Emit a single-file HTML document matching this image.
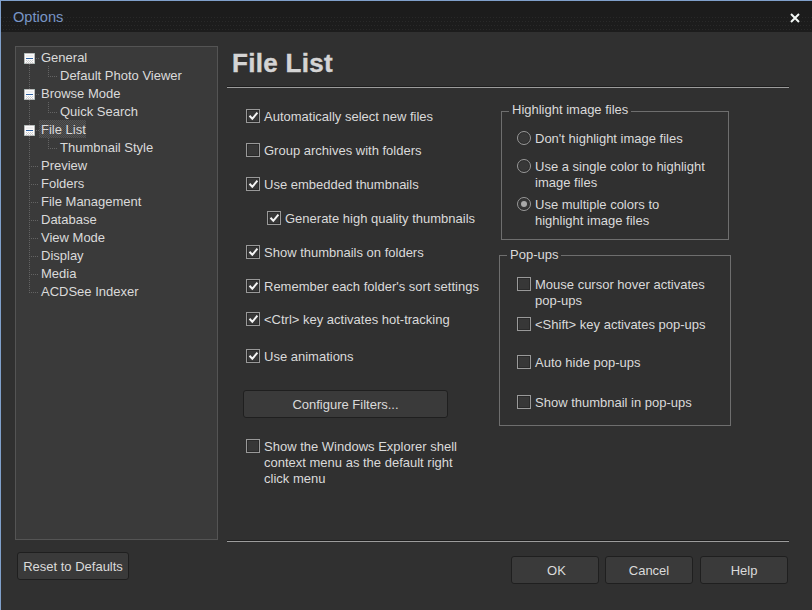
<!DOCTYPE html>
<html><head><meta charset="utf-8">
<style>
*{box-sizing:border-box;margin:0;padding:0}
html,body{width:812px;height:610px;overflow:hidden;background:#303030}
body{font-family:"Liberation Sans",sans-serif;font-size:13px;color:#dadada;position:relative}
.a{position:absolute;white-space:nowrap;line-height:16px}
#bt{position:absolute;left:0;top:0;width:812px;height:1px;background:#80a0cb}
#bl{position:absolute;left:0;top:0;width:1px;height:610px;background:#80a0cb}
#title{position:absolute;left:1px;top:1px;width:811px;height:31px;background:#1c1c1c}
#ttext{left:12px;top:8px;color:#7895c6;font-size:14.6px}
#tree{position:absolute;left:15px;top:46px;width:203px;height:494px;background:#3a3a3a;border:1px solid #545454}
.btn{position:absolute;background:#3a3a3a;border:1px solid #1f1f1f;border-radius:3px;text-align:center;color:#dadada;line-height:25px}
.sep{position:absolute;height:2px;border-top:1px solid #1e1e1e;background:#9c9c9c}
.cb{position:absolute;width:14px;height:14px;border:1px solid #999;background:#373737;box-shadow:inset 0 0 0 1px #2a2a2a}
.cb svg{position:absolute;left:1px;top:1px}
.rd{position:absolute;width:14px;height:14px;border:1px solid #999;border-radius:50%;background:#383838;box-shadow:inset 0 0 0 1px #2c2c2c}
.grp{position:absolute;border:1px solid #6e6e6e}
.gl{position:absolute;background:#303030;padding:0 3px;line-height:16px;white-space:nowrap}
.exp{position:absolute;width:11px;height:11px}
.dv{position:absolute;width:1px;background:repeating-linear-gradient(to bottom,#646464 0 1px,transparent 1px 2px)}
.dh{position:absolute;height:1px;background:repeating-linear-gradient(to right,#646464 0 1px,transparent 1px 2px)}
.sel{position:absolute;background:repeating-conic-gradient(#545454 0 25%,#404040 0 50%) 0 0/2px 2px}
</style></head><body>
<div id="bt"></div><div id="bl"></div>
 <div id="title"><svg width="811" height="14" style="position:absolute;left:0;top:16px"><defs><pattern id="dp" width="3" height="16" patternUnits="userSpaceOnUse"><path d="M0 0h1v1h-1zM2 4h1v1h-1zM1 8h1v1h-1zM2 12h1v1h-1z" fill="#292929"/></pattern></defs><rect width="811" height="14" fill="url(#dp)"/></svg><span class="a" id="ttext">Options</span>
  <svg style="position:absolute;left:789px;top:12px" width="10" height="10" viewBox="0 0 10 10"><path d="M1 1L9 9M9 1L1 9" stroke="#f4f8f6" stroke-width="2"/></svg>
 </div>
 <div id="tree"></div>
<!-- tree items -->
<div class="dv" style="left:29px;top:64px;height:229px"></div>
<div class="exp" style="left:24px;top:53px"><svg width="11" height="11" style="position:absolute;left:0;top:0"><rect x="0.5" y="0.5" width="10" height="10" fill="#fbfbfb" stroke="#bcbcbc"/><rect x="2" y="2" width="7" height="2" fill="#efefef"/><rect x="2" y="5" width="7" height="1" fill="#2f62a3"/><path d="M2 7h1v1h-1zM4 7h1v1h-1zM6 7h1v1h-1zM8 7h1v1h-1zM3 8h1v1h-1zM5 8h1v1h-1zM7 8h1v1h-1zM2 9h1v1h-1zM4 9h1v1h-1zM6 9h1v1h-1zM8 9h1v1h-1z" fill="#cfcfcf"/><path d="M0 0h1v1h-1zM10 0h1v1h-1zM0 10h1v1h-1zM10 10h1v1h-1z" fill="#9ab8b0"/></svg></div>
<div class="dh" style="left:36px;top:58px;width:3px"></div>
<div class="a" style="left:41px;top:50px">General</div>
<div class="dv" style="left:48px;top:66px;height:10px"></div><div class="dh" style="left:48px;top:76px;width:9px"></div>
<div class="a" style="left:60px;top:68px">Default Photo Viewer</div>
<div class="exp" style="left:24px;top:89px"><svg width="11" height="11" style="position:absolute;left:0;top:0"><rect x="0.5" y="0.5" width="10" height="10" fill="#fbfbfb" stroke="#bcbcbc"/><rect x="2" y="2" width="7" height="2" fill="#efefef"/><rect x="2" y="5" width="7" height="1" fill="#2f62a3"/><path d="M2 7h1v1h-1zM4 7h1v1h-1zM6 7h1v1h-1zM8 7h1v1h-1zM3 8h1v1h-1zM5 8h1v1h-1zM7 8h1v1h-1zM2 9h1v1h-1zM4 9h1v1h-1zM6 9h1v1h-1zM8 9h1v1h-1z" fill="#cfcfcf"/><path d="M0 0h1v1h-1zM10 0h1v1h-1zM0 10h1v1h-1zM10 10h1v1h-1z" fill="#9ab8b0"/></svg></div>
<div class="dh" style="left:36px;top:94px;width:3px"></div>
<div class="a" style="left:41px;top:86px">Browse Mode</div>
<div class="dv" style="left:48px;top:102px;height:10px"></div><div class="dh" style="left:48px;top:112px;width:9px"></div>
<div class="a" style="left:60px;top:104px">Quick Search</div>
<div class="sel" style="left:39px;top:120px;width:47px;height:18px"></div>
<div class="exp" style="left:24px;top:125px"><svg width="11" height="11" style="position:absolute;left:0;top:0"><rect x="0.5" y="0.5" width="10" height="10" fill="#fbfbfb" stroke="#bcbcbc"/><rect x="2" y="2" width="7" height="2" fill="#efefef"/><rect x="2" y="5" width="7" height="1" fill="#2f62a3"/><path d="M2 7h1v1h-1zM4 7h1v1h-1zM6 7h1v1h-1zM8 7h1v1h-1zM3 8h1v1h-1zM5 8h1v1h-1zM7 8h1v1h-1zM2 9h1v1h-1zM4 9h1v1h-1zM6 9h1v1h-1zM8 9h1v1h-1z" fill="#cfcfcf"/><path d="M0 0h1v1h-1zM10 0h1v1h-1zM0 10h1v1h-1zM10 10h1v1h-1z" fill="#9ab8b0"/></svg></div>
<div class="dh" style="left:36px;top:130px;width:3px"></div>
<div class="a" style="left:41px;top:122px">File List</div>
<div class="dv" style="left:48px;top:138px;height:10px"></div><div class="dh" style="left:48px;top:148px;width:9px"></div>
<div class="a" style="left:60px;top:140px">Thumbnail Style</div>
<div class="dh" style="left:29px;top:166px;width:9px"></div>
<div class="a" style="left:41px;top:158px">Preview</div>
<div class="dh" style="left:29px;top:184px;width:9px"></div>
<div class="a" style="left:41px;top:176px">Folders</div>
<div class="dh" style="left:29px;top:202px;width:9px"></div>
<div class="a" style="left:41px;top:194px">File Management</div>
<div class="dh" style="left:29px;top:220px;width:9px"></div>
<div class="a" style="left:41px;top:212px">Database</div>
<div class="dh" style="left:29px;top:238px;width:9px"></div>
<div class="a" style="left:41px;top:230px">View Mode</div>
<div class="dh" style="left:29px;top:256px;width:9px"></div>
<div class="a" style="left:41px;top:248px">Display</div>
<div class="dh" style="left:29px;top:274px;width:9px"></div>
<div class="a" style="left:41px;top:266px">Media</div>
<div class="dh" style="left:29px;top:292px;width:9px"></div>
<div class="a" style="left:41px;top:284px">ACDSee Indexer</div>

<div class="btn" style="left:17px;top:552px;width:112px;height:28px;line-height:26px;padding-top:1px">Reset to Defaults</div>

<div class="a" style="left:232px;top:48px;font-size:26px;font-weight:bold;line-height:30px;color:#d4d4d4;letter-spacing:0.3px;-webkit-text-stroke:0.4px #d4d4d4">File List</div>
<div class="sep" style="left:227px;top:86px;width:562px"></div>

<!-- left checkboxes -->
<div class="cb" style="left:246px;top:109px"><svg width="12" height="12"><path d="M1.5 4.8L4.3 7.8L9.4 1.6" stroke="#f4f4f4" stroke-width="2" fill="none"/></svg></div>
<div class="a" style="left:264px;top:109px">Automatically select new files</div>
<div class="cb" style="left:246px;top:143px"></div>
<div class="a" style="left:264px;top:143px">Group archives with folders</div>
<div class="cb" style="left:246px;top:177px"><svg width="12" height="12"><path d="M1.5 4.8L4.3 7.8L9.4 1.6" stroke="#f4f4f4" stroke-width="2" fill="none"/></svg></div>
<div class="a" style="left:264px;top:177px">Use embedded thumbnails</div>
<div class="cb" style="left:267px;top:211px"><svg width="12" height="12"><path d="M1.5 4.8L4.3 7.8L9.4 1.6" stroke="#f4f4f4" stroke-width="2" fill="none"/></svg></div>
<div class="a" style="left:285px;top:211px">Generate high quality thumbnails</div>
<div class="cb" style="left:246px;top:245px"><svg width="12" height="12"><path d="M1.5 4.8L4.3 7.8L9.4 1.6" stroke="#f4f4f4" stroke-width="2" fill="none"/></svg></div>
<div class="a" style="left:264px;top:245px">Show thumbnails on folders</div>
<div class="cb" style="left:246px;top:279px"><svg width="12" height="12"><path d="M1.5 4.8L4.3 7.8L9.4 1.6" stroke="#f4f4f4" stroke-width="2" fill="none"/></svg></div>
<div class="a" style="left:264px;top:279px">Remember each folder's sort settings</div>
<div class="cb" style="left:246px;top:312px"><svg width="12" height="12"><path d="M1.5 4.8L4.3 7.8L9.4 1.6" stroke="#f4f4f4" stroke-width="2" fill="none"/></svg></div>
<div class="a" style="left:264px;top:312px">&lt;Ctrl&gt; key activates hot-tracking</div>
<div class="cb" style="left:246px;top:349px"><svg width="12" height="12"><path d="M1.5 4.8L4.3 7.8L9.4 1.6" stroke="#f4f4f4" stroke-width="2" fill="none"/></svg></div>
<div class="a" style="left:264px;top:349px">Use animations</div>

<div class="btn" style="left:243px;top:390px;width:205px;height:28px;line-height:26px;padding-top:1px">Configure Filters...</div>

<div class="cb" style="left:246px;top:439px"></div>
<div class="a" style="left:264px;top:439px">Show the Windows Explorer shell<br>context menu as the default right<br>click menu</div>

<div class="sep" style="left:227px;top:540px;width:562px"></div>

<!-- group 1 -->
<div class="grp" style="left:501px;top:111px;width:228px;height:129px"></div>
<div class="gl" style="left:509px;top:102px">Highlight image files</div>
<div class="rd" style="left:517px;top:131px"></div>
<div class="a" style="left:535px;top:131px">Don't highlight image files</div>
<div class="rd" style="left:517px;top:159px"></div>
<div class="a" style="left:535px;top:159px">Use a single color to highlight<br>image files</div>
<div class="rd" style="left:517px;top:197px"><div style="position:absolute;left:3px;top:3px;width:6px;height:6px;border-radius:50%;background:#aaa"></div></div>
<div class="a" style="left:535px;top:197px">Use multiple colors to<br>highlight image files</div>

<!-- group 2 -->
<div class="grp" style="left:499px;top:255px;width:232px;height:171px"></div>
<div class="gl" style="left:507px;top:247px">Pop-ups</div>
<div class="cb" style="left:517px;top:277px"></div>
<div class="a" style="left:535px;top:277px">Mouse cursor hover activates<br>pop-ups</div>
<div class="cb" style="left:517px;top:317px"></div>
<div class="a" style="left:535px;top:317px">&lt;Shift&gt; key activates pop-ups</div>
<div class="cb" style="left:517px;top:355px"></div>
<div class="a" style="left:535px;top:355px">Auto hide pop-ups</div>
<div class="cb" style="left:517px;top:395px"></div>
<div class="a" style="left:535px;top:395px">Show thumbnail in pop-ups</div>

<div class="btn" style="left:511px;top:556px;width:88px;height:28px;line-height:26px;padding-top:1px;padding-left:3px">OK</div>
<div class="btn" style="left:605px;top:556px;width:88px;height:28px;line-height:26px;padding-top:1px">Cancel</div>
<div class="btn" style="left:700px;top:556px;width:88px;height:28px;line-height:26px;padding-top:1px">Help</div>
</body></html>
